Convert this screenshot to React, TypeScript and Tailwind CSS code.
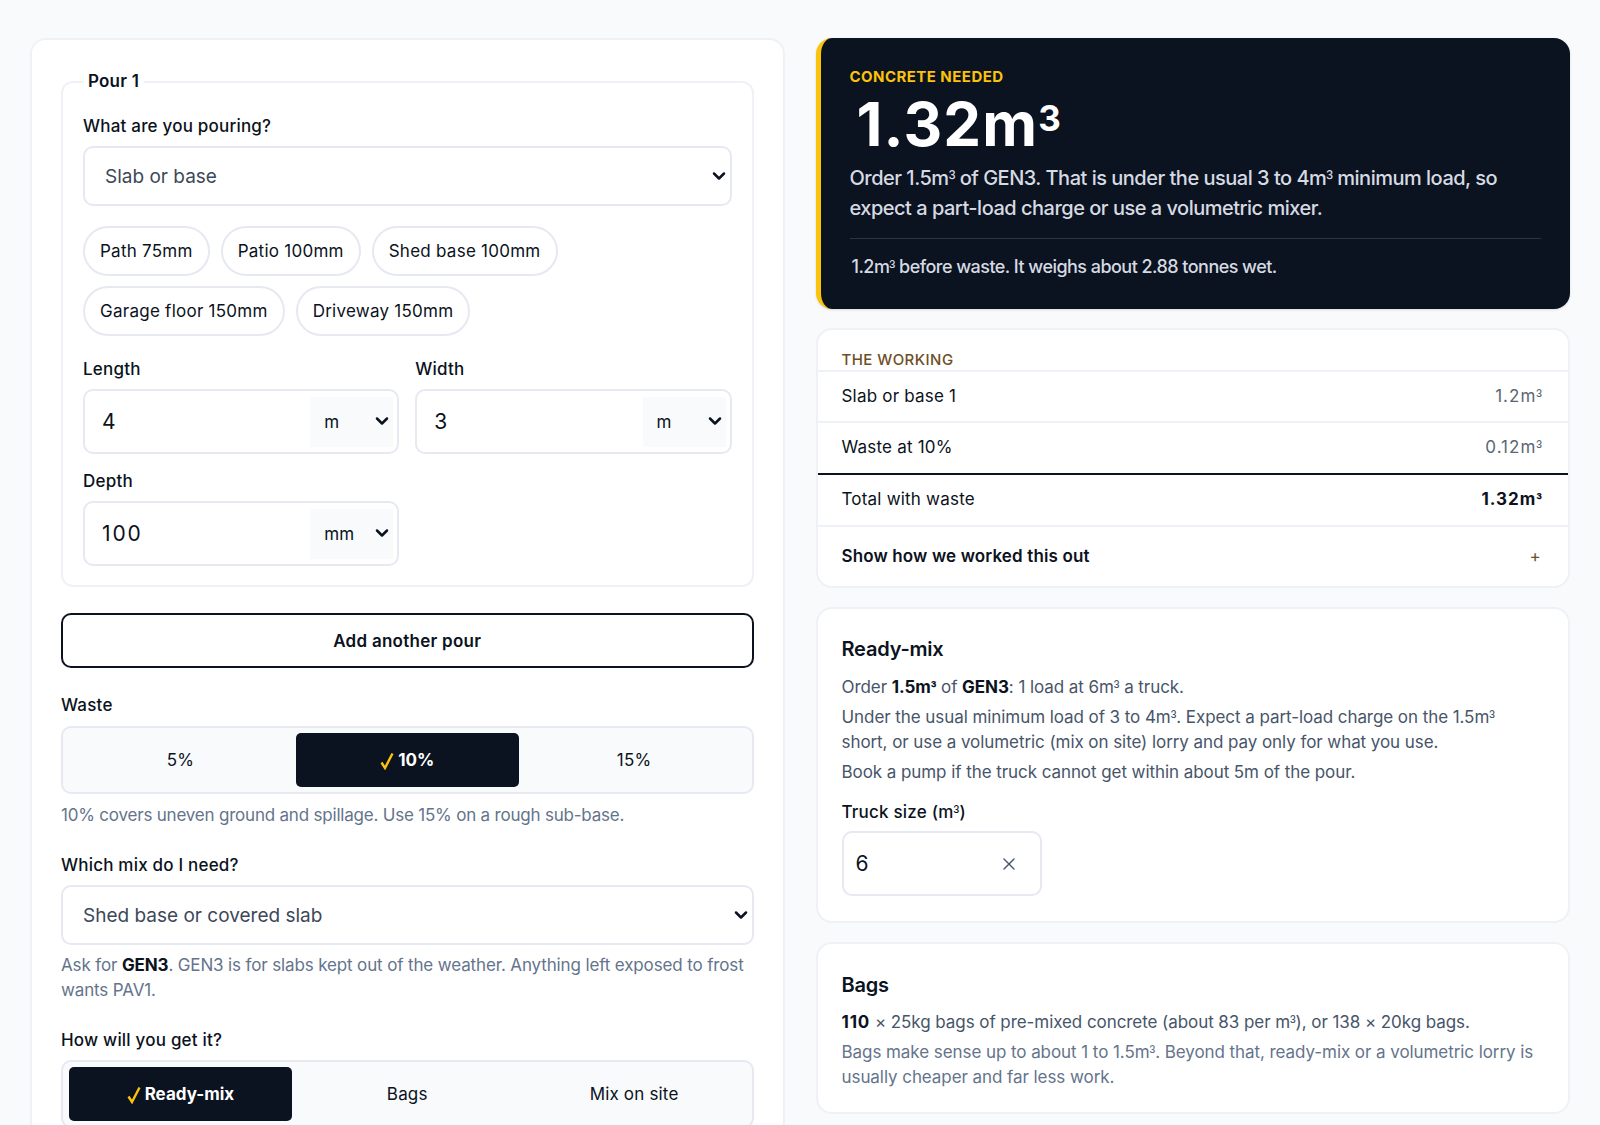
import React from "react";
import { X, ChevronDown } from "lucide-react";

const Cube = () => <span className="font-['Liberation_Sans',sans-serif]">³</span>;

const Label = ({ children, className = "" }: { children: React.ReactNode; className?: string }) => (
  <div className={`h-6 text-[17px] font-medium leading-6 tracking-[0.012em] text-[#0b1220] ${className}`}>{children}</div>
);

const Chip = ({ children }: { children: React.ReactNode }) => (
  <button className="h-[50px] rounded-[25px] border-2 border-[#e6e9f2] bg-white px-[15px] pt-[2px] text-[17px] font-normal tracking-[0.015em] text-[#0b1220]">{children}</button>
);

const UnitInput = ({ value, unit }: { value: string; unit: string }) => (
  <div className="flex h-[65px] items-center rounded-[10px] border-2 border-[#e6e9f2] bg-white pl-[17px] pr-[4px]">
    <input readOnly value={value} className="min-w-0 flex-1 bg-transparent text-[21px] tracking-[0.09em] text-[#0b1220] outline-none" />
    <div className="relative shrink-0">
      <select defaultValue={unit} className="block h-[50px] w-[83px] appearance-none bg-[#f8fafc] pl-[14px] pt-[2px] text-[17px] text-[#0b1220] outline-none">
        <option>{unit}</option>
      </select>
      <ChevronDown size={20} strokeWidth={3} className="pointer-events-none absolute right-[1px] top-[14px] text-[#0b1220]" />
    </div>
  </div>
);

const Tick = () => (
  <svg width="14" height="18" viewBox="0 0 14 18" fill="none" className="shrink-0">
    <path d="M1.5 10.5 L5 16 L12.5 1.5" stroke="#fbc30a" strokeWidth="2.4" />
  </svg>
);

const Segmented = ({ items, active }: { items: string[]; active: string }) => (
  <div className="grid h-[68px] shrink-0 grid-cols-3 gap-1 rounded-[10px] border-2 border-[#e6e9f2] bg-[#f8fafc] px-[6px] py-[5px]">
    {items.map((t) =>
      t === active ? (
        <div key={t} className="flex items-center justify-center gap-[4px] rounded-[5px] bg-[#0b1220] pt-[2px] text-[17px] font-bold tracking-[0] text-white">
          <Tick />
          {t}
        </div>
      ) : (
        <div key={t} className="flex items-center justify-center pt-[2px] text-[17px] tracking-[0.01em] text-[#0b1220]">{t}</div>
      )
    )}
  </div>
);

const BigSelect = ({ value }: { value: string }) => (
  <div className="relative">
    <select defaultValue={value} className="block h-[60px] w-full appearance-none rounded-[10px] border-2 border-[#e6e9f2] bg-white pl-[20px] pr-8 pt-[2px] text-[19px] text-[#3d4858] outline-none">
      <option>{value}</option>
    </select>
    <ChevronDown size={20} strokeWidth={3} className="pointer-events-none absolute right-[3px] top-[20px] text-[#0b1220]" />
  </div>
);

const Row = ({ label, value, bold, dark, h = "h-[52px]" }: { label: string; value: string; bold?: boolean; dark?: boolean; h?: string }) => (
  <div className={`flex ${h} items-center justify-between border-b-2 pl-[24px] pr-[25px] text-[17px] ${dark ? "border-[#0b1220]" : "border-[#eef1f6]"}`}>
    <span className="tracking-[0.012em] text-[#0b1220]">{label}</span>
    <span className={`tracking-[0.06em] ${bold ? "font-bold text-[#0b1220]" : "text-[#5b6675]"}`}>
      {value}
      <Cube />
    </span>
  </div>
);

export default function App() {
  return (
    <div className="h-screen overflow-hidden bg-[#f8fafc] font-['Inter',sans-serif]">
      <div className="grid grid-cols-2 items-start gap-[31px] px-[30px] pt-[38px]">
        <div className="rounded-[16px] border-2 border-[#eef1f6] bg-white px-[29px] pb-8 pt-[29px]">
          <fieldset className="rounded-[12px] border-2 border-[#eef1f6] px-[20px] pb-[19px] pt-5">
            <legend className="px-[5px] text-[17px] font-semibold leading-[25px] tracking-[0.012em] text-[#0b1220]">Pour 1</legend>
            <Label className="mb-2">What are you pouring?</Label>
            <BigSelect value="Slab or base" />
            <div className="mt-5 flex flex-wrap gap-x-[11px] gap-y-[10px]">
              <Chip>Path 75mm</Chip>
              <Chip>Patio 100mm</Chip>
              <Chip>Shed base 100mm</Chip>
              <Chip>Garage floor 150mm</Chip>
              <Chip>Driveway 150mm</Chip>
            </div>
            <div className="mt-[21px] grid grid-cols-2 gap-x-4">
              <div>
                <Label className="mb-2">Length</Label>
                <UnitInput value="4" unit="m" />
              </div>
              <div>
                <Label className="mb-2">Width</Label>
                <UnitInput value="3" unit="m" />
              </div>
              <div className="mt-[15px]">
                <Label className="mb-2">Depth</Label>
                <UnitInput value="100" unit="mm" />
              </div>
            </div>
          </fieldset>
          <button className="mt-[26px] block h-[55px] w-full rounded-[10px] border-2 border-[#0b1220] bg-white pt-[2px] text-[17px] font-semibold tracking-[0.016em] text-[#0b1220]">Add another pour</button>
          <Label className="mb-[9px] mt-[25px]">Waste</Label>
          <Segmented items={["5%", "10%", "15%"]} active="10%" />
          <p className="mt-[9px] text-[17px] leading-[25px] tracking-[-0.012em] text-[#64748b]">10% covers uneven ground and spillage. Use 15% on a rough sub-base.</p>
          <Label className="mb-2 mt-[25px]">Which mix do I need?</Label>
          <BigSelect value="Shed base or covered slab" />
          <p className="mt-2 text-[17px] leading-[25px] tracking-[-0.008em] text-[#64748b]">
            Ask for <b className="font-bold text-[#0b1220]">GEN3</b>. GEN3 is for slabs kept out of the weather. Anything left exposed to frost wants PAV1.
          </p>
          <Label className="mb-2 mt-[25px]">How will you get it?</Label>
          <Segmented items={["Ready-mix", "Bags", "Mix on site"]} active="Ready-mix" />
        </div>

        <div className="flex flex-col gap-[19px]">
          <div className="rounded-[16px] border-l-[5px] border-[#fbc30a] bg-[#0b1220] pb-[29px] pl-[29px] pr-[29px] pt-[29px] shadow-sm">
            <div className="text-[15px] font-bold uppercase leading-5 tracking-[0.03em] text-[#fbc30a]">Concrete needed</div>
            <div className="h-[76px] pl-[7px] text-[60px] font-bold leading-[74px] tracking-[0.02em] text-white">
              1.32m<span className="align-[15px] text-[35px] leading-none">3</span>
            </div>
            <p className="text-[20px] font-medium leading-[30px] tracking-[-0.025em] text-[#d6dae2]">
              Order 1.5m<Cube /> of GEN3. That is under the usual 3 to 4m<Cube /> minimum load, so expect a part-load charge or use a volumetric mixer.
            </p>
            <div className="mt-[15px] border-t border-[#2b3340] pl-[2px] pt-[15px] text-[18px] font-medium leading-[26px] tracking-[-0.03em] text-[#d6dae2]">
              1.2m<Cube /> before waste. It weighs about 2.88 tonnes wet.
            </div>
          </div>

          <div className="rounded-[16px] border-2 border-[#eef1f6] bg-white">
            <div className="flex h-[42px] items-end border-b-2 border-[#eef1f6] pl-[24px] text-[15px] font-medium uppercase leading-5 tracking-[0.03em] text-[#6f4e1f]">The working</div>
            <Row label="Slab or base 1" value="1.2m" h="h-[51px]" />
            <Row label="Waste at 10%" value="0.12m" dark />
            <Row label="Total with waste" value="1.32m" bold />
            <div className="flex h-[59px] items-center justify-between pl-[24px] pr-[27px] text-[17px] font-semibold tracking-[0.008em] text-[#0b1220]">
              <span>Show how we worked this out</span>
              <span className="font-normal text-[#6f4e1f]">+</span>
            </div>
          </div>

          <div className="rounded-[16px] border-2 border-[#eef1f6] bg-white pb-[25px] pl-[24px] pr-[25px] pt-[26px]">
            <h3 className="text-[20px] font-semibold leading-7 tracking-[-0.01em] text-[#0b1220]">Ready-mix</h3>
            <p className="mt-3 text-[17px] leading-[25px] tracking-[-0.004em] text-[#475569]">
              Order <b className="font-bold text-[#0b1220]">1.5m<Cube /></b> of <b className="font-bold text-[#0b1220]">GEN3</b>: 1 load at 6m<Cube /> a truck.
            </p>
            <p className="mt-[5px] text-[17px] leading-[25px] tracking-[-0.004em] text-[#475569]">
              Under the usual minimum load of 3 to 4m<Cube />. Expect a part-load charge on the 1.5m<Cube />
              <br />
              short, or use a volumetric (mix on site) lorry and pay only for what you use.
            </p>
            <p className="mt-[5px] text-[17px] leading-[25px] tracking-[-0.004em] text-[#475569]">Book a pump if the truck cannot get within about 5m of the pour.</p>
            <Label className="mb-[7px] mt-[15px]">Truck size (m<Cube />)</Label>
            <div className="flex h-[65px] w-[200px] items-center justify-between rounded-[10px] border-2 border-[#e6e9f2] bg-white pl-[12px] pr-[21px]">
              <input readOnly value="6" className="w-10 bg-transparent text-[21px] text-[#0b1220] outline-none" />
              <X size={20} strokeWidth={1.6} className="text-[#475569]" />
            </div>
          </div>

          <div className="rounded-[16px] border-2 border-[#eef1f6] bg-white pb-[22px] pl-[24px] pr-[25px] pt-[27px]">
            <h3 className="text-[20px] font-semibold leading-7 tracking-[-0.01em] text-[#0b1220]">Bags</h3>
            <p className="mt-[11px] text-[17px] leading-[25px] tracking-[-0.004em] text-[#475569]">
              <b className="font-bold tracking-[0.05em] text-[#0b1220]">110</b> × 25kg bags of pre-mixed concrete (about 83 per m<Cube />), or 138 × 20kg bags.
            </p>
            <p className="mt-[5px] text-[17px] leading-[25px] tracking-[-0.004em] text-[#64748b]">
              Bags make sense up to about 1 to 1.5m<Cube />. Beyond that, ready-mix or a volumetric lorry is usually cheaper and far less work.
            </p>
          </div>
        </div>
      </div>
    </div>
  );
}
